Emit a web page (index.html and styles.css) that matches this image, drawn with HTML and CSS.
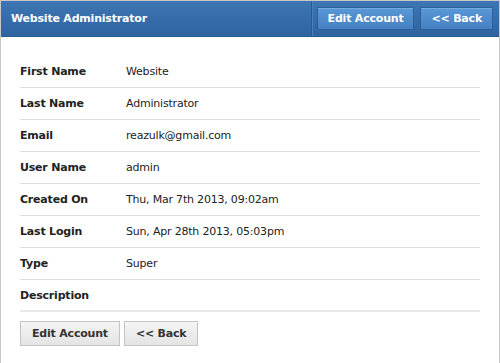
FILE: index.html
```html
<!DOCTYPE html>
<html>
<head>
<meta charset="utf-8">
<link rel="stylesheet" href="styles.css">
</head>
<body>
<div class="panel">
  <div class="header">
    <h1 class="title">Website Administrator</h1>
    <div class="header-actions">
      <a class="hbtn" href="#">Edit Account</a>
      <a class="hbtn" href="#">&lt;&lt; Back</a>
    </div>
  </div>
  <div class="content">
    <div class="row"><span class="label">First Name</span><span class="value">Website</span></div>
    <div class="row"><span class="label">Last Name</span><span class="value">Administrator</span></div>
    <div class="row"><span class="label">Email</span><span class="value">reazulk@gmail.com</span></div>
    <div class="row"><span class="label">User Name</span><span class="value">admin</span></div>
    <div class="row"><span class="label">Created On</span><span class="value">Thu, Mar 7th 2013, 09:02am</span></div>
    <div class="row"><span class="label">Last Login</span><span class="value">Sun, Apr 28th 2013, 05:03pm</span></div>
    <div class="row"><span class="label">Type</span><span class="value">Super</span></div>
    <div class="row last"><span class="label">Description</span><span class="value"></span></div>
    <div class="actions">
      <a class="btn" href="#">Edit Account</a>
      <a class="btn" href="#">&lt;&lt; Back</a>
    </div>
  </div>
</div>
</body>
</html>
```
FILE: styles.css
```css
html, body {
  margin: 0;
  padding: 0;
  background: #fff;
}
body {
  font-family: "DejaVu Sans", Verdana, sans-serif;
  font-size: 11px;
  letter-spacing: -0.2px;
  color: #222;
}
.panel {
  width: 500px;
  height: 363px;
  box-sizing: border-box;
  border: 1px solid #c8c8c8;
  border-bottom: none;
}
.header {
  height: 35px;
  display: flex;
  align-items: center;
  justify-content: space-between;
  background: linear-gradient(#3d76b3, #2f63a1);
  border-bottom: 1px solid #2a5890;
}
.title {
  margin: 0 0 0 10px;
  font-size: 11px;
  font-weight: bold;
  color: #fff;
}
.header-actions {
  display: flex;
  align-self: stretch;
  align-items: center;
  gap: 6px;
  padding: 0 6px 0 5px;
  border-left: 1px solid #2a5a92;
  box-shadow: inset 1px 0 0 #4a80bb;
}
.hbtn {
  display: block;
  height: 21px;
  line-height: 21px;
  padding: 0 10px;
  color: #fff;
  font-weight: bold;
  text-decoration: none;
  background: linear-gradient(#5a98d8, #4680c2);
  border: 1px solid #2d5f9a;
  box-shadow: inset 0 1px 0 #74aae2;
}
.content {
  padding: 19px 19px 0 19px;
}
.row {
  display: flex;
  align-items: center;
  height: 31px;
  border-bottom: 1px solid #dedede;
}
.row.last {
  border-bottom: 2px solid #e8e8e8;
  height: 30px;
}
.label {
  width: 106px;
  font-weight: bold;
  color: #222;
}
.value {
  color: #222;
}
.actions {
  display: flex;
  gap: 4px;
  padding-top: 9px;
}
.btn {
  display: block;
  height: 23px;
  line-height: 23px;
  padding: 0 11px;
  color: #333;
  font-weight: bold;
  text-decoration: none;
  background: linear-gradient(#f4f4f4, #e4e4e4);
  border: 1px solid #c4c4c4;
}
```
